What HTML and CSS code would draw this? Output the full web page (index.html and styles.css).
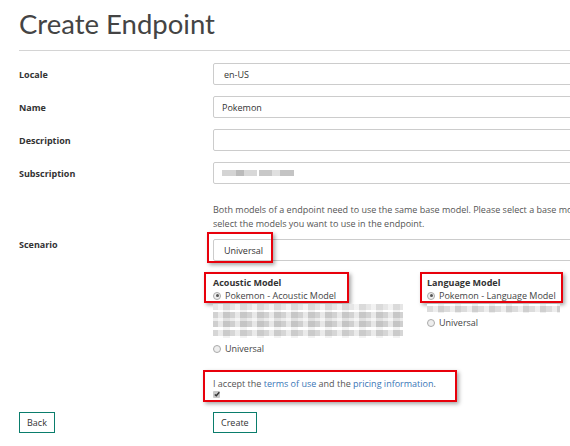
FILE: index.html
```html
<!DOCTYPE html>
<html lang="en">
<head>
<meta charset="utf-8">
<title>Create Endpoint</title>
<link rel="stylesheet" href="styles.css">
</head>
<body>
<div class="page">
  <h1 class="title">Create Endpoint</h1>
  <hr class="rule">
  <div class="form">
    <div class="row">
      <div class="label">Locale</div>
      <div class="field"><div class="input select-input">en-US</div></div>
    </div>
    <div class="row">
      <div class="label">Name</div>
      <div class="field"><div class="input">Pokemon</div></div>
    </div>
    <div class="row">
      <div class="label">Description</div>
      <div class="field"><div class="input"></div></div>
    </div>
    <div class="row">
      <div class="label">Subscription</div>
      <div class="field"><div class="input"><span class="blur-text"></span></div></div>
    </div>
    <div class="row row-scenario">
      <div class="label label-scenario">Scenario</div>
      <div class="field">
        <p class="help">Both models of a endpoint need to use the same base model. Please select a base model first,<br>select the models you want to use in the endpoint.</p>
        <div class="select-wrap">
          <div class="input select-input">Universal</div>
          <span class="mark mark-select"></span>
        </div>
      </div>
    </div>
    <div class="row row-models">
      <div></div>
      <div class="field models">
        <div class="model">
          <div class="model-head">
            <div class="model-title">Acoustic Model</div>
            <div class="radio"><span class="dot checked"></span>Pokemon - Acoustic Model</div>
            <span class="mark mark-acoustic"></span>
          </div>
          <div class="pixels pixels-acoustic"></div>
          <div class="radio"><span class="dot"></span>Universal</div>
        </div>
        <div class="model">
          <div class="model-head">
            <div class="model-title">Language Model</div>
            <div class="radio"><span class="dot checked"></span>Pokemon - Language Model</div>
            <span class="mark mark-language"></span>
          </div>
          <div class="pixels pixels-language"></div>
          <div class="radio"><span class="dot"></span>Universal</div>
        </div>
      </div>
    </div>
    <div class="row">
      <div></div>
      <div class="field">
        <div class="accept">
          <div class="accept-text">I accept the <span class="link">terms of use</span> and the <span class="link">pricing information</span>.</div>
          <span class="check"><svg width="6" height="6" viewBox="0 0 6 6"><path d="M0.8 3.4 L2.3 4.8 L5.3 1.2" fill="none" stroke="#333" stroke-width="1.4"/></svg></span>
          <span class="mark mark-accept"></span>
        </div>
      </div>
    </div>
    <div class="row row-buttons">
      <div><button class="btn">Back</button></div>
      <div><button class="btn">Create</button></div>
    </div>
  </div>
</div>
</body>
</html>
```

FILE: styles.css
```css
html, body {
  margin: 0;
  padding: 0;
  overflow: hidden;
  background: #fff;
}
body {
  font-family: "Open Sans", "Noto Sans", sans-serif;
  font-size: 9px;
  color: #333;
  width: 570px;
  height: 446px;
}
.page {
  padding-left: 19px;
  width: 720px;
}
.title {
  margin: 0;
  padding-top: 6px;
  font-family: Lato, "Open Sans", sans-serif;
  font-size: 27.5px;
  font-weight: 400;
  line-height: 36px;
  color: #444;
}
.rule {
  margin: 8px 0 0 0;
  border: 0;
  border-top: 1px solid #d4d4d4;
  width: 560px;
}
.form {
  padding-top: 12px;
}
.row {
  display: grid;
  grid-template-columns: 194px 440px;
  margin-bottom: 11px;
}
.label {
  font-weight: 700;
  font-size: 9px;
  display: flex;
  align-items: center;
  color: #333;
}
.input {
  box-sizing: border-box;
  height: 22px;
  border: 1px solid #ccc;
  border-radius: 2px;
  padding: 0 8px;
  display: flex;
  align-items: center;
  color: #333;
}
.select-input {
  padding-left: 10px;
}
.blur-text {
  display: block;
  width: 72px;
  height: 6px;
  background: linear-gradient(90deg, #d4d4d4 0 20%, #bbb 20% 30%, #d8d8d8 30% 48%, #fff 48% 52%, #c8c8c8 52% 70%, #e0e0e0 70% 80%, #c4c4c4 80% 100%);
  filter: blur(0.4px);
}
.row-scenario {
  margin-top: 19px;
}
.label-scenario {
  align-items: flex-start;
  padding-top: 35px;
}
.help {
  margin: 0 0 8px 0;
  line-height: 14px;
  color: #555;
  white-space: nowrap;
}
.select-wrap {
  position: relative;
}
.mark {
  position: absolute;
  border: 2px solid #e8000b;
  box-shadow: 2px 2px 4px rgba(0, 0, 0, 0.35);
  box-sizing: border-box;
  pointer-events: none;
}
.mark-select {
  left: -6px;
  top: -7px;
  width: 66px;
  height: 31px;
}
.row-models {
  margin-top: 15px;
}
.models {
  display: grid;
  grid-template-columns: 214px 214px;
}
.model-head {
  position: relative;
}
.model-title {
  font-weight: 700;
  line-height: 13px;
  color: #333;
}
.radio {
  display: flex;
  align-items: center;
  line-height: 13px;
  color: #444;
}
.dot {
  width: 6px;
  height: 6px;
  border: 1px solid #aaa;
  border-radius: 50%;
  background: #eee;
  margin-right: 4px;
  position: relative;
  box-sizing: content-box;
}
.dot.checked::after {
  content: "";
  position: absolute;
  left: 1.5px;
  top: 1.5px;
  width: 3px;
  height: 3px;
  border-radius: 50%;
  background: #555;
}
.mark-acoustic {
  left: -9px;
  top: -4px;
  width: 145px;
  height: 31px;
}
.mark-language {
  left: -7px;
  top: -4px;
  width: 143px;
  height: 31px;
}
.pixels {
  filter: blur(0.3px);
}
.pixels-acoustic {
  margin: 2px 0 4px 0;
  width: 190px;
  height: 34px;
  background:
    repeating-linear-gradient(90deg, rgba(255,255,255,0) 0 5px, rgba(255,255,255,0.5) 5px 10px, rgba(0,0,0,0.05) 10px 17px),
    linear-gradient(180deg, #e6e6e6 0 6px, #fff 6px 8px, #d2d2d2 8px 14px, #ececec 14px 17px, #cfcfcf 17px 23px, #fff 23px 26px, #d6d6d6 26px 32px, #fff 32px);
}
.pixels-language {
  margin: 2px 0 3px 0;
  width: 133px;
  height: 9px;
  background:
    repeating-linear-gradient(90deg, rgba(255,255,255,0) 0 6px, rgba(255,255,255,0.5) 6px 11px, rgba(0,0,0,0.06) 11px 17px),
    linear-gradient(180deg, #fff 0 2px, #dcdcdc 2px 8px, #fff 8px);
}
.accept {
  position: relative;
  padding-top: 11px;
}
.accept-text {
  line-height: 13px;
  color: #555;
}
.link {
  color: #3a76b7;
}
.check {
  display: block;
  width: 7px;
  height: 7px;
  margin-top: 1px;
  background: #c8c8c8;
  border-radius: 1px;
  position: relative;
}
.check svg {
  display: block;
  margin: 0.5px;
}
.mark-accept {
  left: -10px;
  top: 4px;
  width: 254px;
  height: 32px;
}
.row-buttons {
  margin-top: 14px;
}
.btn {
  font-family: inherit;
  font-size: 9px;
  color: #333;
  background: #fff;
  border: 1.5px solid #0a7d6c;
  border-radius: 0;
  height: 21px;
  padding: 0 7px;
  cursor: pointer;
}
```
